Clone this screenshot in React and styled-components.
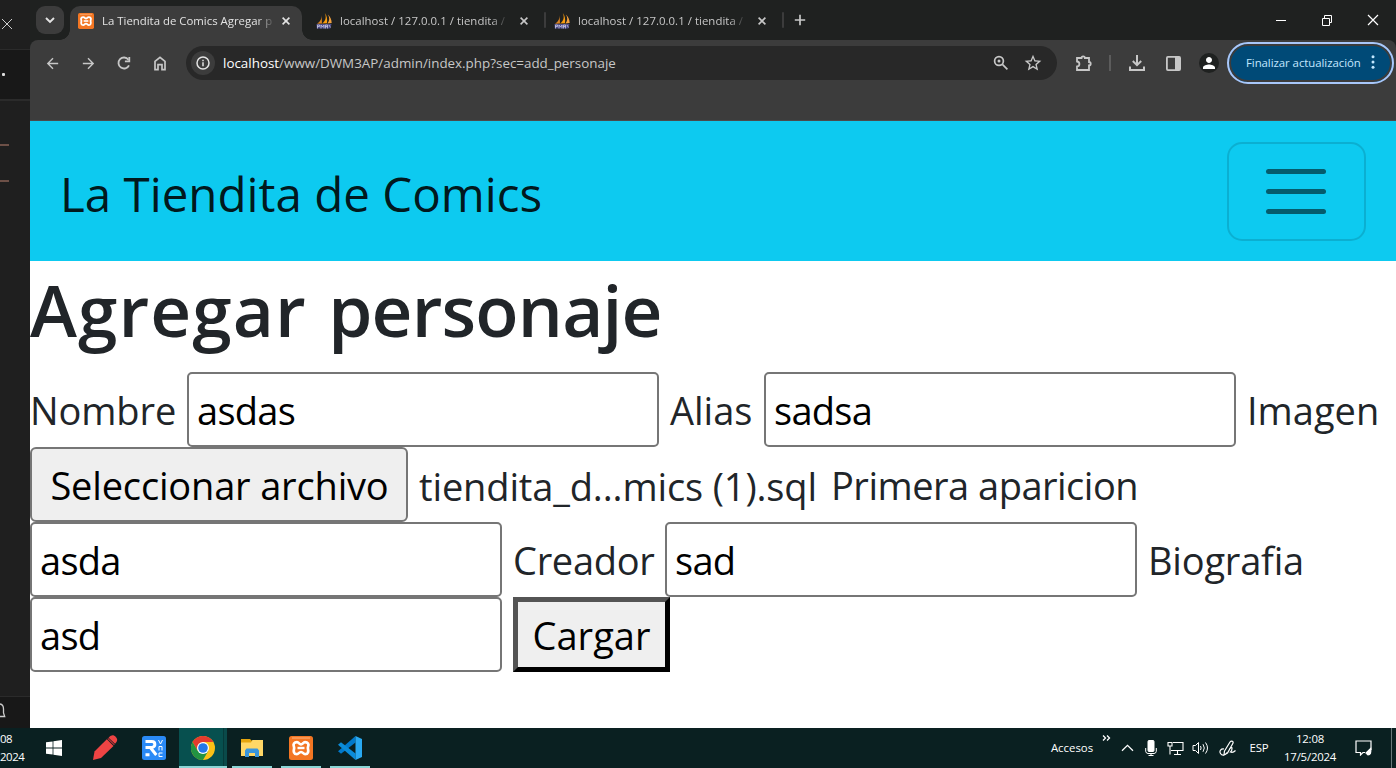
import React from "react";
import styled, { createGlobalStyle, css } from "styled-components";
import { MdArrowBack, MdArrowForward, MdStarBorder, MdPerson } from "react-icons/md";

const GlobalStyle = createGlobalStyle`
  *, *::before, *::after { box-sizing: border-box; }
  html, body { margin: 0; padding: 0; }
  body {
    width: 1396px;
    height: 768px;
    overflow: hidden;
    background: #1f1f1f;
    font-family: "Open Sans", "Noto Sans", sans-serif;
  }
  svg { display: block; flex: none; }
`;

const Desktop = styled.div`
  width: 1396px;
  height: 768px;
  display: flex;
  flex-direction: column;
  overflow: hidden;
`;

const Windows = styled.div`
  display: flex;
  height: 728px;
`;

/* Editor window peeking out at the left */
const Editor = styled.aside`
  width: 30px;
  display: flex;
  flex-direction: column;
  overflow: hidden;
  background: #1f1f1f;
  color: #ccc;
`;

const EditorTitle = styled.div`
  height: 50px;
  padding-top: 18px;
  border-bottom: 1px solid #2b2b2b;
`;

const EditorTabs = styled.div`
  height: 51px;
  display: flex;
  align-items: center;
  background: #181818;
  border-bottom: 2px solid #2b2b2b;
`;

const Dot = styled.i`
  width: 3px;
  height: 3px;
  margin-left: 2px;
  border-radius: 1px;
  background: #ddd;
`;

const EditorBody = styled.div`
  flex: 1;
  padding-top: 43px;
  display: flex;
  flex-direction: column;
  gap: 34px;
`;

const CodeMark = styled.i`
  width: 9px;
  height: 2px;
  background: #6d5047;
`;

const EditorStatus = styled.div`
  height: 32px;
  padding-top: 6px;
  background: #181818;
  border-top: 1px solid #2b2b2b;
`;

/* Browser */
const Browser = styled.main`
  width: 1366px;
  display: flex;
  flex-direction: column;
  background: #1f2120;
`;

const TabStrip = styled.div`
  height: 40px;
  display: flex;
  align-items: flex-start;
  color: #c7c7c7;
`;

const TabSearch = styled.button`
  width: 28px;
  height: 28px;
  margin: 6px 6px 0 6px;
  padding: 0;
  border: 0;
  border-radius: 9px;
  background: #3c3c3c;
  color: #e3e3e3;
  display: grid;
  place-items: center;
`;

const Tab = styled.div`
  position: relative;
  width: ${(p) => p.$width}px;
  height: 34px;
  margin-top: 6px;
  padding: 0 ${(p) => (p.$active ? 12 : 16)}px 5px 8px;
  display: flex;
  align-items: center;
  font-size: 11.4px;
  ${(p) =>
    p.$active &&
    css`
      margin-right: 6px;
      background: #3c3c3c;
      color: #e3e3e3;
      border-radius: 10px 10px 0 0;
      &::before,
      &::after {
        content: "";
        position: absolute;
        bottom: 0;
        width: 10px;
        height: 10px;
      }
      &::before {
        left: -10px;
        background: radial-gradient(circle at 0 0, transparent 9.5px, #3c3c3c 10px);
      }
      &::after {
        right: -10px;
        background: radial-gradient(circle at 100% 0, transparent 9.5px, #3c3c3c 10px);
      }
    `}
`;

const TabTitle = styled.span`
  margin-left: 8px;
  margin-right: auto;
  white-space: nowrap;
  letter-spacing: ${(p) => p.$spacing || 0}px;
  -webkit-mask-image: linear-gradient(90deg, #000 calc(100% - 14px), transparent calc(100% + 3px));
  mask-image: linear-gradient(90deg, #000 calc(100% - 14px), transparent calc(100% + 3px));
`;

const TabDivider = styled.i`
  width: 2px;
  height: 16px;
  margin-top: 12px;
  border-radius: 1px;
  background: #3c3c3c;
`;

const NewTab = styled.div`
  margin: 14px 0 0 10px;
`;

const WindowControls = styled.div`
  height: 40px;
  margin-left: auto;
  margin-right: 17px;
  display: flex;
  align-items: center;
  gap: 34px;
  color: #fff;
`;

const Toolbar = styled.div`
  height: 81px;
  padding: 2px 2px 0 4px;
  display: flex;
  align-items: flex-start;
  background: #3c3c3c;
  border-radius: 8px 8px 0 0;
  border-bottom: 1px solid #4b4b4b;
  color: #c7c7c7;
`;

const ToolButton = styled.div`
  width: 36px;
  height: 42px;
  display: grid;
  place-items: center;
`;

const Omnibox = styled.div`
  width: 871px;
  height: 34px;
  margin: 4px 8px 0;
  padding: 0 14px 0 5px;
  display: flex;
  align-items: center;
  border-radius: 17px;
  background: #282828;
`;

const SiteInfo = styled.span`
  width: 24px;
  height: 24px;
  border-radius: 50%;
  background: #3c3c3c;
  display: grid;
  place-items: center;
  color: #e3e3e3;
`;

const Url = styled.span`
  margin-left: 8px;
  margin-right: auto;
  font-size: 13.4px;
  color: #c7c7c7;
  white-space: nowrap;
  b { font-weight: 400; color: #fff; }
`;

const OmniboxActions = styled.div`
  display: flex;
  align-items: center;
  gap: 14px;
`;

const ToolDivider = styled.i`
  width: 2px;
  height: 16px;
  margin: 13px 8px 0;
  background: #5c5c5c;
`;

const Avatar = styled.span`
  width: 20px;
  height: 20px;
  border-radius: 50%;
  background: #1f2120;
  color: #fff;
  display: grid;
  place-items: center;
`;

const UpdateButton = styled.button`
  width: 167px;
  height: 42px;
  margin-left: auto;
  padding: 0 17px 2px 17px;
  display: flex;
  align-items: center;
  justify-content: space-between;
  border: 2px solid #a8c7fa;
  border-radius: 21px;
  background: #004a77;
  box-shadow: inset 0 0 0 2px #3c3c3c;
  color: #c2e7ff;
  font: 11.4px "Open Sans", "Noto Sans", sans-serif;
  letter-spacing: -0.05px;
  white-space: nowrap;
`;

/* Web page */
const Page = styled.section`
  flex: 1;
  background: #fff;
  color: #212529;
  overflow: hidden;
`;

const Navbar = styled.nav`
  height: 140px;
  padding: 0 30px;
  display: flex;
  align-items: center;
  justify-content: space-between;
  background: #0dcaf0;
`;

const Brand = styled.a`
  padding-top: 4px;
  font-size: 47.5px;
  line-height: 75px;
  color: rgba(0, 0, 0, 0.9);
  white-space: nowrap;
`;

const Toggler = styled.button`
  width: 139px;
  height: 99px;
  padding: 0 1px 0 0;
  border: 2px solid rgba(0, 0, 0, 0.13);
  border-radius: 15px;
  background: transparent;
  display: flex;
  flex-direction: column;
  align-items: center;
  justify-content: center;
  gap: 15px;
`;

const TogglerBar = styled.i`
  width: 60px;
  height: 5px;
  border-radius: 3px;
  background: rgba(0, 0, 0, 0.55);
`;

const Title = styled.h1`
  height: 95px;
  margin: 0 0 16px;
  font-size: 71px;
  font-weight: 600;
  line-height: 98px;
  white-space: nowrap;
  word-spacing: 3px;
`;

const TitleWord = styled.span`
  letter-spacing: ${(p) => p.$spacing}px;
`;

const FormRow = styled.div`
  height: 75px;
  display: flex;
  align-items: center;
  gap: 11px;
  font-size: 38px;
  line-height: 73px;
  white-space: nowrap;
`;

const Label = styled.label`
  width: ${(p) => p.$width}px;
  padding-top: ${(p) => p.$drop || 2}px;
  flex: none;
  letter-spacing: ${(p) => p.$spacing || 0}px;
`;

const fieldFont = css`
  font-family: inherit;
  font-size: 38px;
  color: #000;
`;

const Input = styled.input`
  ${fieldFont}
  width: 472px;
  height: 75px;
  flex: none;
  padding: 0 8px;
  border: 2px solid #767676;
  border-radius: 5px;
  background: #fff;
  outline: 0;
  letter-spacing: -0.7px;
`;

const FileButton = styled.button`
  ${fieldFont}
  width: 378px;
  height: 75px;
  flex: none;
  padding: 1px 0 0 1px;
  border: 2px solid #767676;
  border-radius: 6px;
  background: #efefef;
  letter-spacing: -0.17px;
`;

const Submit = styled.button`
  ${fieldFont}
  width: 157px;
  height: 75px;
  flex: none;
  padding: 1px 0 0;
  border: 5px outset #000;
  background: #efefef;
`;

/* Taskbar */
const Taskbar = styled.footer`
  height: 40px;
  display: flex;
  background: #0a2021;
  color: #fff;
  font-size: 11.4px;
  line-height: 18px;
`;

const OtherClock = styled.div`
  width: 30px;
  padding-top: 2px;
  white-space: nowrap;
  letter-spacing: -0.4px;
`;

const TaskButton = styled.div`
  width: 48px;
  height: 40px;
  margin-right: ${(p) => p.$after || 1}px;
  display: grid;
  place-items: center;
  ${(p) =>
    p.$open &&
    css`
      background: linear-gradient(#8ad5d5, #8ad5d5) bottom / 40px 2px no-repeat;
    `}
  ${(p) =>
    p.$active &&
    css`
      background:
        linear-gradient(#8ad5d5, #8ad5d5) bottom / 100% 2px no-repeat,
        linear-gradient(90deg, #07504f 44px, #063a3a 44px, #063a3a 45px, #0a4a4a 45px);
    `}
`;

const Tray = styled.div`
  margin-left: auto;
  display: flex;
  align-items: center;
`;

const TrayText = styled.span`
  width: ${(p) => p.$width}px;
  margin-right: ${(p) => p.$after}px;
  text-align: center;
  white-space: nowrap;
  letter-spacing: ${(p) => p.$spacing || 0}px;
`;

const TrayIcon = styled.span`
  width: ${(p) => p.$width}px;
  display: grid;
  place-items: center;
  padding-bottom: ${(p) => p.$lift || 0}px;
`;

const DesktopEdge = styled.i`
  width: 5px;
  height: 40px;
  border-left: 1px solid #67797a;
`;

const Stroke = ({ w, h = w, sw = 1, children }) => (
  <svg width={w} height={h} viewBox={`0 0 ${w} ${h}`} fill="none" stroke="currentColor" strokeWidth={sw}>
    {children}
  </svg>
);

const CloseIcon = () => (
  <Stroke w={8} sw={1.6}><path d="M.6.6l6.8 6.8M7.4.6L.6 7.4" /></Stroke>
);

const XamppIcon = ({ size }) => (
  <svg width={size} height={size} viewBox="0 0 24 24">
    <rect width="24" height="24" rx="2.5" fill="#f37623" />
    <path d="M3 2h18" stroke="#fbb583" strokeWidth="1" />
    <path
      d="M8 6.2c-3 0-4 2.2-3.2 4 .4.9.4 1.4.3 2.2-.8 3-.3 5.8 2.8 5.8 1.800 0 2-2.200 4.100-2.200s2.300 2.200 4.100 2.200c3.100 0 3.600-2.800 2.800-5.800-.1-.8-.1-1.300.3-2.200.8-1.800-.2-4-3.200-4-2 0-2.200 2.200-4 2.200s-2-2.200-4-2.200z"
      fill="none" stroke="#fff" strokeWidth="2.700"
    />
    <path d="M8.5 12h7" stroke="#fff" strokeWidth="2.4" />
  </svg>
);

const PmaIcon = () => (
  <svg width="16" height="16" viewBox="0 0 16 16">
    <path d="M5.600 1.500C5.800 5 5 8 1 10.800l5-.3z" fill="#d98324" />
    <path d="M8.800 0C10.500 4 10 7.500 6 10.600l5-.3C11.600 6 10.800 2.500 8.800 0z" fill="#f89c0e" />
    <path d="M11.800 1.500c2 3 2 6-.4 9l4.300-.5C15.600 6.500 14.300 3.800 11.800 1.500z" fill="#f0a040" />
    <path d="M.5 11h15l-1.200 4.500H.8z" fill="#4c4c88" />
    <path d="M1.500 15.500v-3.500h2v1.500h-2M5 15.500v-3.500l1.500 2L8 12v3.500M9.500 15.500v-3.500h2v3.500m0-2h-2M13 12l1.500 2.500" stroke="#d5d5ee" strokeWidth=".7" fill="none" />
  </svg>
);

const ReloadIcon = () => (
  <Stroke w={16} sw={1.8}>
    <path d="M13 10.3A5.500 5.500 0 1 1 12.400 4.700" />
    <path d="M13.300 2v4.400H8.900" />
  </Stroke>
);

const HomeIcon = () => (
  <Stroke w={14} h={16} sw={1.7}>
    <path d="M2 14.600V6.300L7 2.300l5 4v8.300H9V9.600H5v5z" />
  </Stroke>
);

const InfoIcon = () => (
  <Stroke w={14} sw={1.5}>
    <circle cx="7" cy="7" r="6" />
    <path d="M7 6.300V10.300M7 3.700v1.500" />
  </Stroke>
);

const ZoomIcon = () => (
  <Stroke w={16} sw={1.7}>
    <circle cx="6" cy="6" r="4.400" />
    <path d="M9.400 9.400l5 5" />
    <circle cx="6" cy="6" r="1.500" fill="currentColor" stroke="none" />
  </Stroke>
);

const ExtensionIcon = () => (
  <Stroke w={18} sw={1.8}>
    <path d="M3 4h4.500a1.700 1.700 0 0 1 3.400 0H15v4a1.700 1.700 0 0 1 0 3.400V16H3v-3.500c3.200-.3 3.200-4.700 0-5z" />
  </Stroke>
);

const DownloadIcon = () => (
  <Stroke w={16} sw={2}>
    <path d="M8 0v9.500M3.800 6L8 10.200 12.200 6M1 11.500V15h14v-3.500" />
  </Stroke>
);

const SidePanelIcon = () => (
  <svg width="15" height="15" viewBox="0 0 15 15">
    <rect x=".9" y=".9" width="13.200" height="13.200" rx="1" fill="none" stroke="currentColor" strokeWidth="1.800" />
    <path d="M9 1h5v13H9z" fill="currentColor" />
  </svg>
);

const WindowsLogo = () => (
  <svg width="16" height="16" viewBox="0 0 16 16" fill="#fff">
    <path d="M0 2.300l6.600-.9v6.200H0zM7.400 1.300L16 0v7.600H7.400zM0 8.400h6.600v6.200L0 13.700zM7.400 8.400H16V16l-8.600-1.300z" />
  </svg>
);

const PenIcon = () => (
  <svg width="26" height="26" viewBox="0 0 26 26" fill="#ee4444">
    <path d="M1 25L2.500 16.500 14.800 4.200l6.700 6.700L9 23z" />
    <path d="M16.600 2.700c3-3.200 5-2.900 7-1s2.300 4-.6 7.100z" />
    <path d="M15.700 3.500l6.700 6.300" stroke="#b92e35" strokeWidth="1.200" />
  </svg>
);

const RealVncIcon = () => (
  <svg width="24" height="24" viewBox="0 0 24 24" fill="none" stroke="#fff">
    <rect width="24" height="24" rx="2.500" fill="#2a8af6" stroke="none" />
    <path d="M3.500 5.600h6.200c4.200 0 4.200 5.800 0 5.800H8.300l6 7.600M3.500 11.400h5M3.500 18.800h4" strokeWidth="3" />
    <path d="M16.500 4l2 4 2-4M17 14.500v-4h3v4M20.500 17H17v3.500h3.500" strokeWidth="1" />
  </svg>
);

const ChromeIcon = () => (
  <svg width="24" height="24" viewBox="0 0 24 24">
    <circle cx="12" cy="12" r="12" fill="#fbc116" />
    <path d="M12 6H22.400A12 12 0 0 0 1.600 6L6.800 15z" fill="#e33b2e" />
    <path d="M1.600 6A12 12 0 0 0 12 24L17.200 15 12 12 6.800 15z" fill="#229342" />
    <circle cx="12" cy="12" r="6" fill="#fff" />
    <circle cx="12" cy="12" r="4.800" fill="#2378e8" />
  </svg>
);

const ExplorerIcon = () => (
  <svg width="22" height="18" viewBox="0 0 22 18">
    <path d="M0 0h9l1.500 1.500H22V17H0z" fill="#e5a50e" />
    <path d="M0 3.500h10L11.500 1H22v16H0z" fill="#ffd766" />
    <path d="M4 18v-6.500L5.500 9.500h11l1.500 2V18h-4v-4H8v4z" fill="#3a96dc" />
  </svg>
);

const CodeIcon = () => (
  <svg width="24" height="24" viewBox="0 0 24 24">
    <path d="M17.500 6.500L3 17.700l-3-2.500L17.500 0z" fill="#0179cb" />
    <path d="M17.500 17.500L3 6.300 0 8.800 17.500 24z" fill="#0b8bd8" />
    <path d="M17.500 0L24 3v18l-6.500 3z" fill="#29a9f2" />
  </svg>
);

const ChevronUp = () => <Stroke w={13} h={8} sw={1.3}><path d="M1 6.800L6.500 1.300 12 6.800" /></Stroke>;

const MicIcon = () => (
  <Stroke w={12} h={16}>
    <rect x="3" y=".5" width="6" height="11" rx="1" fill="currentColor" />
    <path d="M.7 8v3.300q.3 2.200 2.300 2.200h6q2 0 2.300-2.200V8M6 13.500v2M3.500 15.500h5" />
  </Stroke>
);

const NetworkIcon = () => (
  <Stroke w={17} h={15} sw={1.1}>
    <path d="M6 1.500h10v8H4M3 5.500v8M10.500 9.500v3.500M7 13.500h7M1 1.500h4v3.500H1z" />
  </Stroke>
);

const VolumeIcon = () => (
  <Stroke w={18} h={14}>
    <path d="M1 4.500h2.500L6.500 1.500v11L3.500 9.500H1z" />
    <path d="M8.500 5q1.200 2 0 4M11 3.200q2.600 3.800 0 7.600M13.500 1.500q4 5.500 0 11" />
  </Stroke>
);

const InkIcon = () => (
  <Stroke w={18} h={17} sw={1.2}>
    <path d="M5.500 11L11 2c1.500-2 4-.5 2.800 1.500L8.500 13 5 15zM5 9C2 8.500 0 11 1.500 13.500s5 2 6.500-1M10.500 9q2.500-3 2.500-.5t-1.500 3.500q2.500 1 5-1.500" />
  </Stroke>
);

const NotifyIcon = () => (
  <Stroke w={17} h={16} sw={1.2}>
    <path d="M10 12.500H8L5.500 15V12.500H1V1h15v9" />
    <path d="M15.700 8.500L11 13l2 2c2.500 0 3.200-2.500 2.700-6.500z" fill="currentColor" />
  </Stroke>
);

const PhpTab = () => (
  <Tab $width={236}>
    <PmaIcon />
    <TabTitle $spacing={0.04}>localhost / 127.0.0.1 / tiendita /</TabTitle>
    <CloseIcon />
  </Tab>
);

export default function App() {
  return (
    <Desktop>
      <GlobalStyle />
      <Windows>
        <Editor>
          <EditorTitle>
            <Stroke w={13} h={12}><path d="M2 1l10 10M12 1L2 11" /></Stroke>
          </EditorTitle>
          <EditorTabs><Dot /></EditorTabs>
          <EditorBody><CodeMark /><CodeMark /></EditorBody>
          <EditorStatus>
            <Stroke w={7} h={16} sw={1.3}><path d="M0 1q3.500.5 3.500 5v4l1.200 3.500H0" /></Stroke>
          </EditorStatus>
        </Editor>

        <Browser>
          <TabStrip>
            <TabSearch><Stroke w={10} h={8} sw={1.9}><path d="M1 2l4 4 4-4" /></Stroke></TabSearch>
            <Tab $width={232} $active>
              <XamppIcon size={16} />
              <TabTitle>La Tiendita de Comics Agregar p</TabTitle>
              <CloseIcon />
            </Tab>
            <PhpTab />
            <TabDivider />
            <PhpTab />
            <TabDivider />
            <NewTab><Stroke w={12} sw={1.7}><path d="M6 .8v10.400M.8 6h10.400" /></Stroke></NewTab>
            <WindowControls>
              <Stroke w={12} h={11}><path d="M1 5.500h10" /></Stroke>
              <Stroke w={12} h={11}><path d="M1.500 3.500h7v7h-7zM3.500 3V.5h7v7H9" /></Stroke>
              <Stroke w={12} h={12} sw={1.2}><path d="M1 1l10 10M11 1L1 11" /></Stroke>
            </WindowControls>
          </TabStrip>

          <Toolbar>
            <ToolButton><MdArrowBack size={17} /></ToolButton>
            <ToolButton><MdArrowForward size={17} /></ToolButton>
            <ToolButton><ReloadIcon /></ToolButton>
            <ToolButton><HomeIcon /></ToolButton>
            <Omnibox>
              <SiteInfo><InfoIcon /></SiteInfo>
              <Url><b>localhost</b>/www/DWM3AP/admin/index.php?sec=add_personaje</Url>
              <OmniboxActions>
                <ZoomIcon />
                <MdStarBorder size={20} />
              </OmniboxActions>
            </Omnibox>
            <ToolButton><ExtensionIcon /></ToolButton>
            <ToolDivider />
            <ToolButton><DownloadIcon /></ToolButton>
            <ToolButton><SidePanelIcon /></ToolButton>
            <ToolButton><Avatar><MdPerson size={18} /></Avatar></ToolButton>
            <UpdateButton>
              Finalizar actualización
              <svg width="4" height="14" viewBox="0 0 4 14" fill="currentColor">
                <circle cx="2" cy="1.700" r="1.500" /><circle cx="2" cy="7" r="1.500" /><circle cx="2" cy="12.300" r="1.500" />
              </svg>
            </UpdateButton>
          </Toolbar>

          <Page>
            <Navbar>
              <Brand>La Tiendita de Comics</Brand>
              <Toggler><TogglerBar /><TogglerBar /><TogglerBar /></Toggler>
            </Navbar>
            <Title>
              <TitleWord $spacing={1.1}>Agregar</TitleWord> <TitleWord $spacing={-0.8}>personaje</TitleWord>
            </Title>
            <FormRow>
              <Label $width={146} $spacing={-0.1}>Nombre</Label>
              <Input defaultValue="asdas" />
              <Label $width={83}>Alias</Label>
              <Input defaultValue="sadsa" />
              <Label $width={134}>Imagen</Label>
            </FormRow>
            <FormRow>
              <FileButton>Seleccionar archivo</FileButton>
              <Label $width={401} $spacing={-0.13} $drop={4}>tiendita_d...mics (1).sql</Label>
              <Label $width={310} $spacing={-0.5}>Primera aparicion</Label>
            </FormRow>
            <FormRow>
              <Input defaultValue="asda" />
              <Label $width={141} $spacing={-0.3}>Creador</Label>
              <Input defaultValue="sad" />
              <Label $width={160} $spacing={-0.2}>Biografia</Label>
            </FormRow>
            <FormRow>
              <Input defaultValue="asd" />
              <Submit>Cargar</Submit>
            </FormRow>
          </Page>
        </Browser>
      </Windows>

      <Taskbar>
        <OtherClock>08<br />2024</OtherClock>
        <TaskButton $after={3}><WindowsLogo /></TaskButton>
        <TaskButton><PenIcon /></TaskButton>
        <TaskButton><RealVncIcon /></TaskButton>
        <TaskButton $active><ChromeIcon /></TaskButton>
        <TaskButton $open><ExplorerIcon /></TaskButton>
        <TaskButton $open><XamppIcon size={24} /></TaskButton>
        <TaskButton $open><CodeIcon /></TaskButton>
        <Tray>
          <TrayText $width={44} $after={7}>Accesos</TrayText>
          <TrayIcon $width={10} $lift={21}>
            <Stroke w={9} h={6} sw={1.3}><path d="M1 .5L3.500 3 1 5.500M5 .5L7.500 3 5 5.500" /></Stroke>
          </TrayIcon>
          <TrayIcon $width={32}><ChevronUp /></TrayIcon>
          <TrayIcon $width={15}><MicIcon /></TrayIcon>
          <TrayIcon $width={34}><NetworkIcon /></TrayIcon>
          <TrayIcon $width={14}><VolumeIcon /></TrayIcon>
          <TrayIcon $width={43}><InkIcon /></TrayIcon>
          <TrayText $width={20} $after={15} $spacing={-0.2}>ESP</TrayText>
          <TrayText $width={52} $after={17} $spacing={-0.2}>12:08<br />17/5/2024</TrayText>
          <TrayIcon $width={20}><NotifyIcon /></TrayIcon>
          <TrayIcon $width={18} />
          <DesktopEdge />
        </Tray>
      </Taskbar>
    </Desktop>
  );
}
